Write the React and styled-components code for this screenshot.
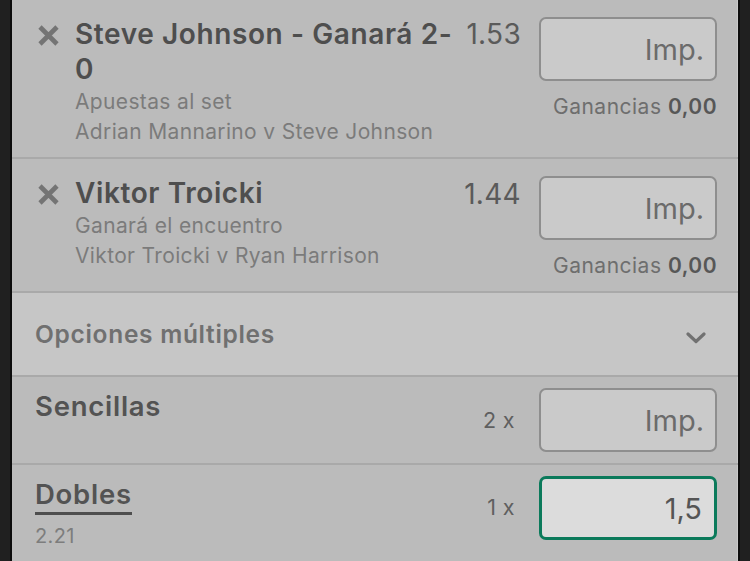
import React from "react";
import styled, { createGlobalStyle } from "styled-components";

const Global = createGlobalStyle`
  html, body { margin: 0; padding: 0; background: #202020; }
  body { width: 750px; height: 561px; overflow: hidden; font-family: Inter, "Noto Sans", Roboto, sans-serif; }
  #root { height: 561px; }
`;

const Frame = styled.div`
  height: 561px;
  padding: 0 10px;
  background: #202020;
  box-sizing: border-box;
`;

const Panel = styled.div`
  height: 100%;
  background: #bbbbbb;
  border-left: 2px solid #0c0c0c;
  border-right: 2px solid #0c0c0c;
  box-shadow: inset -1px 0 0 #c8c8c8;
  overflow: hidden;
`;

const BetRow = styled.div`
  display: flex;
  align-items: flex-start;
  padding: 17px 21px 10px 25px;
  border-bottom: 2px solid #a9a9a9;
`;

const Remove = styled.span`
  width: 23px;
  height: 23px;
  margin-top: 7px;
  margin-right: 15px;
  flex: none;
  display: flex;
`;

const Info = styled.div`
  flex: 1;
  min-width: 0;
  padding-right: 6px;
`;

const Title = styled.div`
  font-size: 28px;
  font-weight: 600;
  letter-spacing: 0.6px;
  line-height: 35px;
  color: #4e4e4e;
`;

const Sub = styled.div`
  font-size: 21px;
  letter-spacing: 0.35px;
  line-height: 30px;
  color: #7b7b7b;
`;

const Odds = styled.div`
  font-size: 28px;
  letter-spacing: 0.3px;
  line-height: 35px;
  color: #5a5a5a;
  margin-top: ${(p) => p.$top || 0}px;
  margin-right: 18px;
  flex: none;
`;

const Stake = styled.div`
  width: 178px;
  flex: none;
  display: flex;
  flex-direction: column;
  align-items: stretch;
`;

const Input = styled.div`
  height: 64px;
  box-sizing: border-box;
  border-radius: 7px;
  border: ${(p) => (p.$active ? "3px solid #0b7a5b" : "2px solid #8e8e8e")};
  background: ${(p) => (p.$active ? "#dcdcdc" : "#cacaca")};
  display: flex;
  align-items: center;
  justify-content: flex-end;
  padding: 0 ${(p) => (p.$active ? 12 : 11)}px 0 0;
  font-size: 29px;
  color: ${(p) => (p.$active ? "#555555" : "#6b6b6b")};
`;

const Winnings = styled.div`
  margin-top: 11px;
  text-align: right;
  font-size: 21px;
  letter-spacing: 0.5px;
  line-height: 30px;
  color: #6e6e6e;
  b { font-weight: 600; color: #575757; }
`;

const OptionsRow = styled.div`
  height: 82px;
  background: #c6c6c6;
  display: flex;
  align-items: center;
  justify-content: space-between;
  padding: 0 32px 0 23px;
  border-bottom: 2px solid #a9a9a9;
  font-size: 24.5px;
  letter-spacing: 0.7px;
  font-weight: 600;
  color: #707070;
`;

const Chevron = styled.span`
  display: flex;
  margin-top: 8px;
`;

const MultiRow = styled.div`
  display: flex;
  align-items: flex-start;
  padding: 11px 21px ${(p) => (p.$last ? 40 : 11)}px 23px;
  border-bottom: 2px solid #a9a9a9;
`;

const MultiInfo = styled.div`
  flex: 1;
`;

const MultiTitle = styled.div`
  display: inline-block;
  font-size: 27.5px;
  letter-spacing: 0.75px;
  font-weight: 600;
  line-height: 36px;
  color: #535353;
  border-bottom: ${(p) => (p.$underline ? "3px solid #4e4e4e" : "none")};
`;

const MultiOdds = styled.div`
  font-size: 20px;
  letter-spacing: 0.4px;
  line-height: 28px;
  margin-top: 7px;
  color: #7d7d7d;
`;

const Count = styled.div`
  align-self: ${(p) => (p.$top ? "flex-start" : "center")};
  margin-top: ${(p) => p.$top || 0}px;
  font-size: 21.5px;
  letter-spacing: 0.4px;
  color: #5f5f5f;
  margin-right: 24px;
`;

const XIcon = () => (
  <svg width="23" height="23" viewBox="0 0 23 23">
    <path d="M3 3 L20 20 M20 3 L3 20" stroke="#747474" strokeWidth="4.6" strokeLinecap="butt" />
  </svg>
);

const ChevronIcon = () => (
  <svg width="20" height="12" viewBox="0 0 20 12">
    <path d="M2 2 L10 9.5 L18 2" fill="none" stroke="#717171" strokeWidth="3.2" strokeLinecap="round" strokeLinejoin="round" />
  </svg>
);

const bets = [
  {
    title: "Steve Johnson - Ganará 2-0",
    lines: ["Apuestas al set", "Adrian Mannarino v Steve Johnson"],
    odds: "1.53",
    oddsTop: 0,
  },
  {
    title: "Viktor Troicki",
    lines: ["Ganará el encuentro", "Viktor Troicki v Ryan Harrison"],
    odds: "1.44",
    oddsTop: 1,
  },
];

export default function App() {
  return (
    <Frame>
      <Global />
      <Panel>
        {bets.map((b) => (
          <BetRow key={b.title}>
            <Remove><XIcon /></Remove>
            <Info>
              <Title>{b.title}</Title>
              {b.lines.map((l) => (
                <Sub key={l}>{l}</Sub>
              ))}
            </Info>
            <Odds $top={b.oddsTop}>{b.odds}</Odds>
            <Stake>
              <Input>Imp.</Input>
              <Winnings>
                Ganancias <b>0,00</b>
              </Winnings>
            </Stake>
          </BetRow>
        ))}
        <OptionsRow>
          <span>Opciones múltiples</span>
          <Chevron><ChevronIcon /></Chevron>
        </OptionsRow>
        <MultiRow>
          <MultiInfo>
            <MultiTitle>Sencillas</MultiTitle>
          </MultiInfo>
          <Count>2 x</Count>
          <Stake>
            <Input>Imp.</Input>
          </Stake>
        </MultiRow>
        <MultiRow $last>
          <MultiInfo>
            <MultiTitle $underline>Dobles</MultiTitle>
            <MultiOdds>2.21</MultiOdds>
          </MultiInfo>
          <Count $top={18}>1 x</Count>
          <Stake>
            <Input $active>1,5</Input>
          </Stake>
        </MultiRow>
      </Panel>
    </Frame>
  );
}
